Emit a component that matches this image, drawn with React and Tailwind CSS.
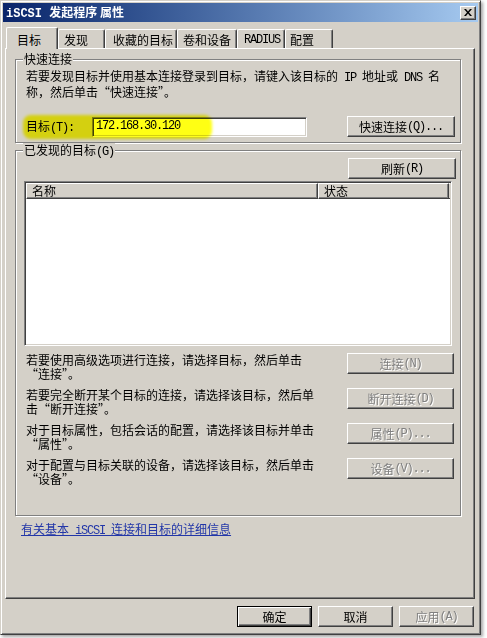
import React from "react";

// half-width latin run, SimSun-like width (6px per char)
function L({ children }) {
    return <span className="font-['Liberation_Mono',monospace] text-[12px] tracking-[-1.2px]">{children}</span>;
}

function Btn({ children, className, disabled, isDefault }) {
    const edge = isDefault
        ? "border border-black shadow-[inset_1px_1px_0_#fff,inset_-1px_-1px_0_#404040,inset_-2px_-2px_0_#808080]"
        : "border border-t-white border-l-white border-r-[#404040] border-b-[#404040] shadow-[inset_-1px_-1px_0_#808080]";
    const text = disabled ? "text-[#808080] [text-shadow:1px_1px_0_#fff]" : "text-black";
    return (
        <div className={`${className} ${edge} ${text} bg-[#d4d0c8] flex items-center justify-center leading-[14px] shrink-0`}>
            {children}
        </div>
    );
}

function Tab({ children, className, selected }) {
    return (
        <div
            className={`${className} ${
                selected ? "h-[22px] -mb-px relative z-10 pl-[10px]" : "h-[19px]"
            } bg-[#d4d0c8] border-t border-l border-r border-t-white border-l-white border-r-[#404040] shadow-[inset_-1px_0_0_#808080] rounded-t-[2px] flex items-center leading-[14px] pt-[2px] shrink-0`}
        >
            {children}
        </div>
    );
}

function Group({ label, className, children }) {
    return (
        <div className={`${className} relative border border-[#808080] shadow-[inset_1px_1px_0_#fff,1px_1px_0_#fff]`}>
            <span className="absolute -top-[8px] left-[7px] px-[1px] bg-[#d4d0c8] leading-[14px]">{label}</span>
            {children}
        </div>
    );
}

const actions = [
    { lines: ["若要使用高级选项进行连接，请选择目标，然后单击", "“连接”。"], btn: <>连接<L>(N)</L></> },
    { lines: ["若要完全断开某个目标的连接，请选择该目标，然后单", "击“断开连接”。"], btn: <>断开连接<L>(D)</L></> },
    { lines: ["对于目标属性，包括会话的配置，请选择该目标并单击", "“属性”。"], btn: <>属性<L>(P)...</L></> },
    { lines: ["对于配置与目标关联的设备，请选择该目标，然后单击", "“设备”。"], btn: <>设备<L>(V)...</L></> },
];

export default function App() {
    return (
        <div className="w-[487px] h-[638px] bg-white font-['Noto_Sans_CJK_SC',sans-serif] text-[12px] leading-[13px] text-black">
            <div className="w-[481px] h-[635px] bg-[#d4d0c8] border border-t-[#d4d0c8] border-l-[#d4d0c8] border-r-[#404040] border-b-[#404040] shadow-[inset_1px_1px_0_#fff,inset_-1px_-1px_0_#808080,2px_2px_3px_rgba(0,0,0,0.35)] p-[2px] flex flex-col">
                {/* title bar */}
                <div className="h-[19px] shrink-0 flex items-center justify-between pl-[3px] pr-[2px] bg-linear-to-r from-[#0a246a] to-[#a6caf0]">
                    <span className="text-white font-bold leading-[14px]">
                        <span className="font-['Liberation_Mono',monospace]">iSCSI </span>发起程序 属性
                    </span>
                    <div className="w-[16px] h-[14px] bg-[#d4d0c8] border border-t-white border-l-white border-r-[#404040] border-b-[#404040] shadow-[inset_-1px_-1px_0_#808080] flex items-center justify-center">
                        <svg width="8" height="7" viewBox="0 0 8 7">
                            <path d="M0 0h2l2 2.4L6 0h2L5 3.5 8 7H6L4 4.6 2 7H0l3-3.5z" fill="#000" />
                        </svg>
                    </div>
                </div>

                {/* tabs */}
                <div className="mt-[4px] h-[22px] shrink-0 flex items-end pl-[3px]">
                    <Tab className="w-[52px]" selected>目标</Tab>
                    <Tab className="w-[47px] pl-[5px]">发现</Tab>
                    <Tab className="w-[72px] pl-[7px]">收藏的目标</Tab>
                    <Tab className="w-[60px] pl-[5px]">卷和设备</Tab>
                    <Tab className="w-[48px] pl-[6px]"><L>RADIUS</L></Tab>
                    <Tab className="w-[48px] pl-[4px]">配置</Tab>
                </div>

                {/* tab page */}
                <div className="ml-[2px] w-[470px] h-[551px] shrink-0 border border-t-white border-l-white border-r-[#404040] border-b-[#404040] shadow-[inset_-1px_-1px_0_#808080] flex flex-col">
                    <Group label="快速连接" className="ml-[9px] mt-[10px] w-[446px] h-[84px] shrink-0">
                        <div className="pt-[9px] pl-[10px]">
                            若要发现目标并使用基本连接登录到目标，请键入该目标的<L> IP </L>地址或<L> DNS </L>名
                            <br />
                            称，然后单击“快速连接”。
                        </div>
                        <div className="relative mt-[18px] ml-[10px] flex items-center">
                            <span className="w-[66px] shrink-0">目标<L>(T):</L></span>
                            <div className="w-[215px] h-[20px] bg-white border border-t-[#808080] border-l-[#808080] border-r-white border-b-white shadow-[inset_1px_1px_0_#404040,inset_-1px_-1px_0_#d4d0c8] flex items-center pl-[3px]">
                                <L>172.168.30.120</L>
                            </div>
                            <Btn className="ml-[40px] w-[108px] h-[21px]">快速连接<L>(Q)...</L></Btn>
                            {/* highlighter mark */}
                            <div className="pointer-events-none absolute -left-[3px] -top-[1px] w-[189px] h-[24px] rounded-[8px] bg-[#ffff14] mix-blend-multiply blur-[1.5px]" />
                        </div>
                    </Group>

                    <Group label={<>已发现的目标<L>(G)</L></>} className="ml-[9px] mt-[7px] w-[446px] h-[366px] shrink-0">
                        <div className="mt-[7px] flex justify-end pr-[4px]">
                            <Btn className="w-[108px] h-[21px]">刷新<L>(R)</L></Btn>
                        </div>
                        <div className="mt-[2px] ml-[8px] w-[428px] h-[165px] p-px bg-white border border-t-[#808080] border-l-[#808080] border-r-white border-b-white shadow-[inset_1px_1px_0_#404040,inset_-1px_-1px_0_#d4d0c8]">
                            <div className="flex h-[16px]">
                                <div className="w-[292px] pl-[5px] bg-[#d4d0c8] border border-t-white border-l-white border-r-[#404040] border-b-[#404040] shadow-[inset_-1px_-1px_0_#808080] leading-[14px]">名称</div>
                                <div className="w-[131px] pl-[5px] bg-[#d4d0c8] border border-t-white border-l-white border-r-[#404040] border-b-[#404040] shadow-[inset_-1px_-1px_0_#808080] leading-[14px]">状态</div>
                                <div className="flex-1 bg-[#d4d0c8] border-t border-b border-t-white border-b-[#404040]" />
                            </div>
                        </div>
                        <div className="mt-[7px]">
                            {actions.map((a, i) => (
                                <div key={i} className="flex h-[35px]">
                                    <div className="w-[331px] pl-[10px] shrink-0 leading-[14px]">
                                        {a.lines[0]}
                                        <br />
                                        {a.lines[1]}
                                    </div>
                                    <Btn className="w-[107px] h-[21px]" disabled>{a.btn}</Btn>
                                </div>
                            ))}
                        </div>
                    </Group>

                    <a className="mt-[6px] ml-[15px] self-start text-[#2236a8] underline underline-offset-1 cursor-pointer">
                        有关基本<L> iSCSI </L>连接和目标的详细信息
                    </a>
                </div>

                {/* dialog buttons */}
                <div className="mt-[7px] flex justify-end gap-[6px] pr-[4px]">
                    <Btn className="w-[75px] h-[21px]" isDefault>确定</Btn>
                    <Btn className="w-[75px] h-[21px]">取消</Btn>
                    <Btn className="w-[75px] h-[21px]" disabled>应用<L>(A)</L></Btn>
                </div>
            </div>
        </div>
    );
}
